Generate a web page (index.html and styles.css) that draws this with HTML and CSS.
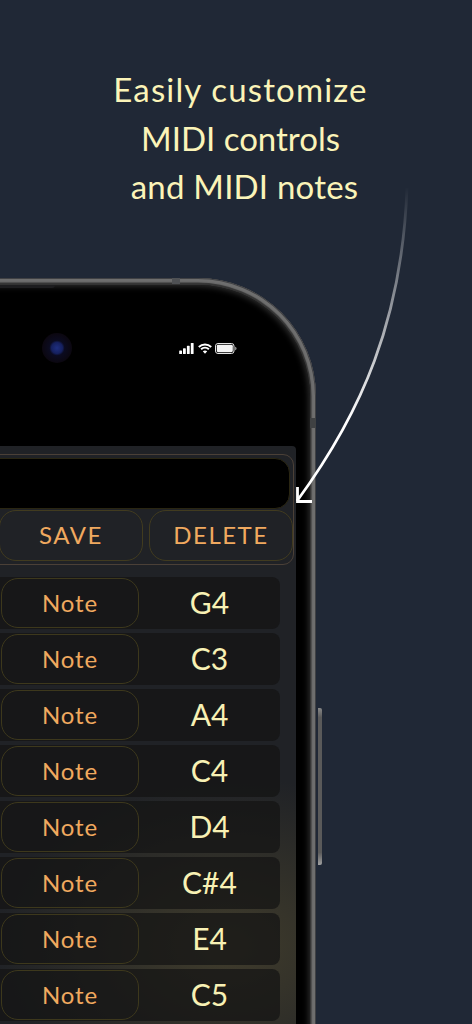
FILE: index.html
```html
<!DOCTYPE html>
<html lang="en">
<head>
<meta charset="utf-8">
<title>Easily customize MIDI controls and MIDI notes</title>
<link rel="stylesheet" href="styles.css">
</head>
<body>
<main class="page">
  <h1 class="headline">
    <span class="line line-wide">Easily customize</span>
    <span class="line">MIDI controls</span>
    <span class="line line-shift">and MIDI notes</span>
  </h1>
  <div class="phone">
    <span class="side-button"></span>
    <div class="frame">
      <span class="seam seam-top"></span>
      <span class="seam seam-right"></span>
      <div class="screen">
        <span class="lip"></span>
        <span class="camera"></span>
        <div class="status">
          <svg class="signal" viewBox="0 0 15 11" aria-hidden="true"><rect x="0.2" y="7.5" width="2.8" height="3.5" rx=".6"/><rect x="4" y="5.3" width="2.800" height="5.7" rx=".6"/><rect x="7.900" y="2.800" width="2.800" height="8.200" rx=".6"/><rect x="11.800" y="0" width="2.800" height="11" rx=".6"/></svg>
          <svg class="wifi" viewBox="0 0 14 11" aria-hidden="true"><path d="M.8 3.900C4.300.6 9.700.6 13.200 3.900M3.100 6.200C5.400 4.100 8.600 4.100 10.900 6.200" fill="none" stroke="#fff" stroke-width="2"/><path d="M4.800 8.200c1.300-1.100 3.100-1.100 4.400 0L7 10.700z" fill="#fff"/></svg>
          <svg class="battery" viewBox="0 0 22 11" aria-hidden="true"><rect x=".5" y=".5" width="18.500" height="10" rx="2.500" fill="none" stroke="#e4e4e4"/><rect x="1.800" y="1.800" width="16" height="7.400" rx="1.400" fill="#f4f4f4"/><path d="M20.200 3.800c.9.3 1.300 1 1.300 1.700s-.4 1.400-1.300 1.700z" fill="#aaa"/></svg>
        </div>
        <section class="panel">
          <div class="form">
            <div class="field"></div>
            <div class="actions">
              <button class="btn">SAVE</button>
              <button class="btn">DELETE</button>
            </div>
          </div>
          <div class="rows">
            <div class="row"><span class="kind">Note</span><span class="value">G4</span></div>
            <div class="row"><span class="kind">Note</span><span class="value">C3</span></div>
            <div class="row"><span class="kind">Note</span><span class="value">A4</span></div>
            <div class="row"><span class="kind">Note</span><span class="value">C4</span></div>
            <div class="row"><span class="kind">Note</span><span class="value">D4</span></div>
            <div class="row"><span class="kind">Note</span><span class="value">C#4</span></div>
            <div class="row"><span class="kind">Note</span><span class="value">E4</span></div>
            <div class="row"><span class="kind">Note</span><span class="value">C5</span></div>
          </div>
        </section>
      </div>
    </div>
  </div>
  <svg class="arrow" viewBox="0 0 472 1024" aria-hidden="true">
    <defs>
      <linearGradient id="fade" gradientUnits="userSpaceOnUse" x1="0" y1="186" x2="0" y2="420">
        <stop offset="0" stop-color="#fff" stop-opacity="0"/>
        <stop offset="1" stop-color="#fff"/>
      </linearGradient>
    </defs>
    <path d="M407 188C402 320 362 412 297 501" fill="none" stroke="url(#fade)" stroke-width="2.800"/>
    <path d="M297.500 487V501.500H312" fill="none" stroke="#fff" stroke-width="2.800"/>
  </svg>
</main>
</body>
</html>
```
FILE: styles.css
```css
* { box-sizing: border-box; }
html, body { margin: 0; padding: 0; height: 100%; }
body { background: #202836; overflow: hidden; font-family: "Lato", "Noto Sans", sans-serif; }
.page { position: relative; width: 472px; height: 1024px; overflow: hidden; padding-top: 65px; }
.headline { margin: 0; font-size: 33px; font-weight: 400; line-height: 48.500px; color: #fbf4b8; text-align: center; height: 146px; width: 481px; }
.line { display: block; }
.line-wide { letter-spacing: 1.150px; }
.line-shift { padding-left: 8px; letter-spacing: .2px; }
.phone { position: relative; width: 400px; height: 900px; margin-left: -84px; margin-top: 67px; }
.side-button { position: absolute; left: 402px; top: 430px; width: 4px; height: 157px; background: linear-gradient(#888, #5a5a5a 6%, #5a5a5a 92%, #a0a0a0); border-radius: 0 2px 2px 0; }
.frame { position: relative; height: 100%; padding: 7px 6px 0 0; border-radius: 0 118px 0 0; background: #333; box-shadow: inset 0 0 0 1px #404144, inset 0 0 1px 4.500px #6e6e6e; }
.seam { position: absolute; background: #4f5154; }
.seam-top { left: 256px; top: 0; width: 8px; height: 6px; }
.seam-right { right: 0; top: 140px; width: 6px; height: 10px; background: #3f4143; }
.screen { position: relative; height: 100%; padding: 161px 14px 0 0; border-radius: 0 112px 0 0; background: #000; box-shadow: inset 0 0 6px 1px #343434; }
.lip { position: absolute; left: 60px; top: 0; width: 79px; height: 3px; background: #1d1d1f; border-radius: 0 0 3px 0; }
.camera { position: absolute; left: 126px; top: 48px; width: 30px; height: 30px; border-radius: 50%; background: radial-gradient(circle, #1f2f80 0, #15205e 26%, #0b0b20 36%, #0b0710 70%, #000 100%); }
.status { position: absolute; left: 263px; top: 58px; display: flex; align-items: center; gap: 4px; height: 11px; }
.signal { width: 15px; height: 11px; fill: #fff; }
.wifi { width: 14px; height: 11px; }
.battery { width: 22px; height: 11px; margin-left: -1px; }
.panel { width: 100%; height: 800px; padding: 8px 2px 0 0; border-radius: 0 4px 0 0; background: radial-gradient(ellipse 230px 170px at 310px 500px, #403c2c 0, rgba(64, 60, 44, 0) 100%), #202226; }
.form { height: 111px; padding: 3px 0 0 0; border: 1px solid #4b4037; border-radius: 11px; }
.field { height: 51px; margin-right: 3px; background: #000; border: 1px solid #2a2612; border-radius: 15px; }
.actions { display: flex; justify-content: flex-end; gap: 6px; margin-top: 1px; }
.btn { width: 144px; height: 51px; padding: 0 0 2px; font: 400 24px "Lato", "Noto Sans", sans-serif; letter-spacing: 1.500px; color: #f0a95f; background: transparent; border: 1.500px solid #413b1f; border-radius: 17px; }
.rows { display: flex; flex-direction: column; gap: 4px; margin-top: 12px; padding-right: 14px; }
.row { display: flex; justify-content: flex-end; height: 52px; padding-top: 1px; background: rgba(20, 20, 20, .72); border-radius: 8px; }
.kind { width: 138px; height: 50px; padding-bottom: 2px; display: flex; align-items: center; justify-content: center; font-size: 24px; letter-spacing: .9px; color: #f0a95f; border: 1.500px solid #3d381c; border-radius: 17px; }
.value { width: 141px; height: 50px; padding-bottom: 3px; display: flex; align-items: center; justify-content: center; font-size: 30px; color: #f8f1b4; }
.arrow { position: absolute; left: 0; top: 0; width: 472px; height: 1024px; }
```
